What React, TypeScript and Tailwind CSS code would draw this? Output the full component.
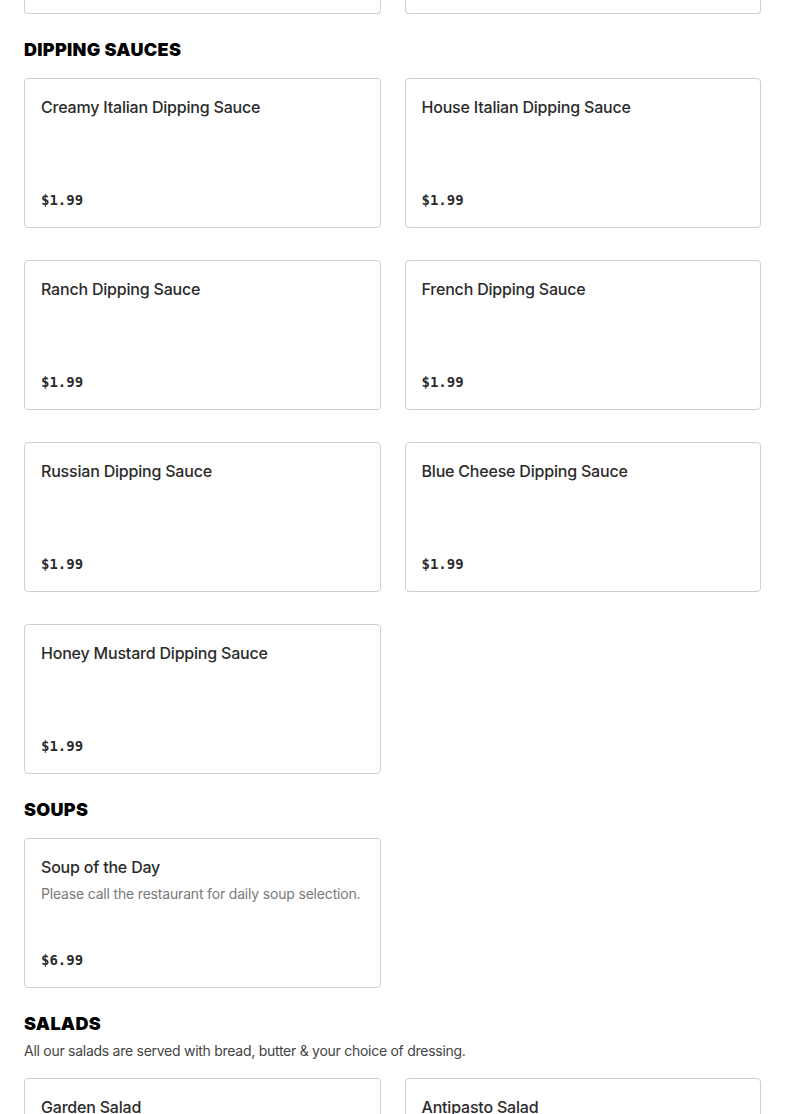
const font = { fontFamily: "Inter, 'Noto Sans', sans-serif" };

type Item = { name: string; price: string; desc?: string };

const DIPPING: Item[] = [
  { name: "Creamy Italian Dipping Sauce", price: "$1.99" },
  { name: "House Italian Dipping Sauce", price: "$1.99" },
  { name: "Ranch Dipping Sauce", price: "$1.99" },
  { name: "French Dipping Sauce", price: "$1.99" },
  { name: "Russian Dipping Sauce", price: "$1.99" },
  { name: "Blue Cheese Dipping Sauce", price: "$1.99" },
  { name: "Honey Mustard Dipping Sauce", price: "$1.99" },
];

const SOUPS: Item[] = [
  { name: "Soup of the Day", price: "$6.99", desc: "Please call the restaurant for daily soup selection." },
];

const SALADS: Item[] = [
  { name: "Garden Salad", price: "$7.99" },
  { name: "Antipasto Salad", price: "$10.99" },
];

function ItemCard({ item }: { item: Item }) {
  return (
    <div className="flex h-[150px] flex-col rounded border border-[#cfcfcf] bg-white px-4 pt-4 pb-[17px]">
      <p className="text-[16px] font-medium leading-6 tracking-[-0.2px] text-[#2b2b2b]">{item.name}</p>
      {item.desc && (
        <p className="mt-[5px] whitespace-nowrap text-[14px] leading-5 tracking-[-0.18px] text-[#7a7a7a]">{item.desc}</p>
      )}
      <p
        className="mt-auto text-[14px] font-bold leading-5 text-[#2b2b2b]"
        style={{ fontFamily: "'DejaVu Sans Mono', 'Liberation Mono', monospace" }}
      >
        {item.price}
      </p>
    </div>
  );
}

function Section({ title, note, items }: { title: string; note?: string; items: Item[] }) {
  return (
    <section className="mt-6">
      <h2 className="text-[18px] font-black uppercase leading-6 tracking-[0.3px] text-black">{title}</h2>
      {note && <p className="mt-[5px] text-[14px] leading-5 tracking-[-0.27px] text-[#444]">{note}</p>}
      <div className={`${note ? "mt-[17px]" : "mt-4"} grid grid-cols-2 gap-x-6 gap-y-8`}>
        {items.map((item) => (
          <ItemCard key={item.name} item={item} />
        ))}
      </div>
    </section>
  );
}

export default function App() {
  return (
    <main className="min-h-screen bg-white px-6" style={font}>
      {/* tail of the section above, scrolled out of view */}
      <div className="grid grid-cols-2 gap-x-6">
        <div className="h-[14px] rounded-b border border-t-0 border-[#cfcfcf]" />
        <div className="h-[14px] rounded-b border border-t-0 border-[#cfcfcf]" />
      </div>
      <Section title="Dipping Sauces" items={DIPPING} />
      <Section title="Soups" items={SOUPS} />
      <Section
        title="Salads"
        note="All our salads are served with bread, butter & your choice of dressing."
        items={SALADS}
      />
    </main>
  );
}
